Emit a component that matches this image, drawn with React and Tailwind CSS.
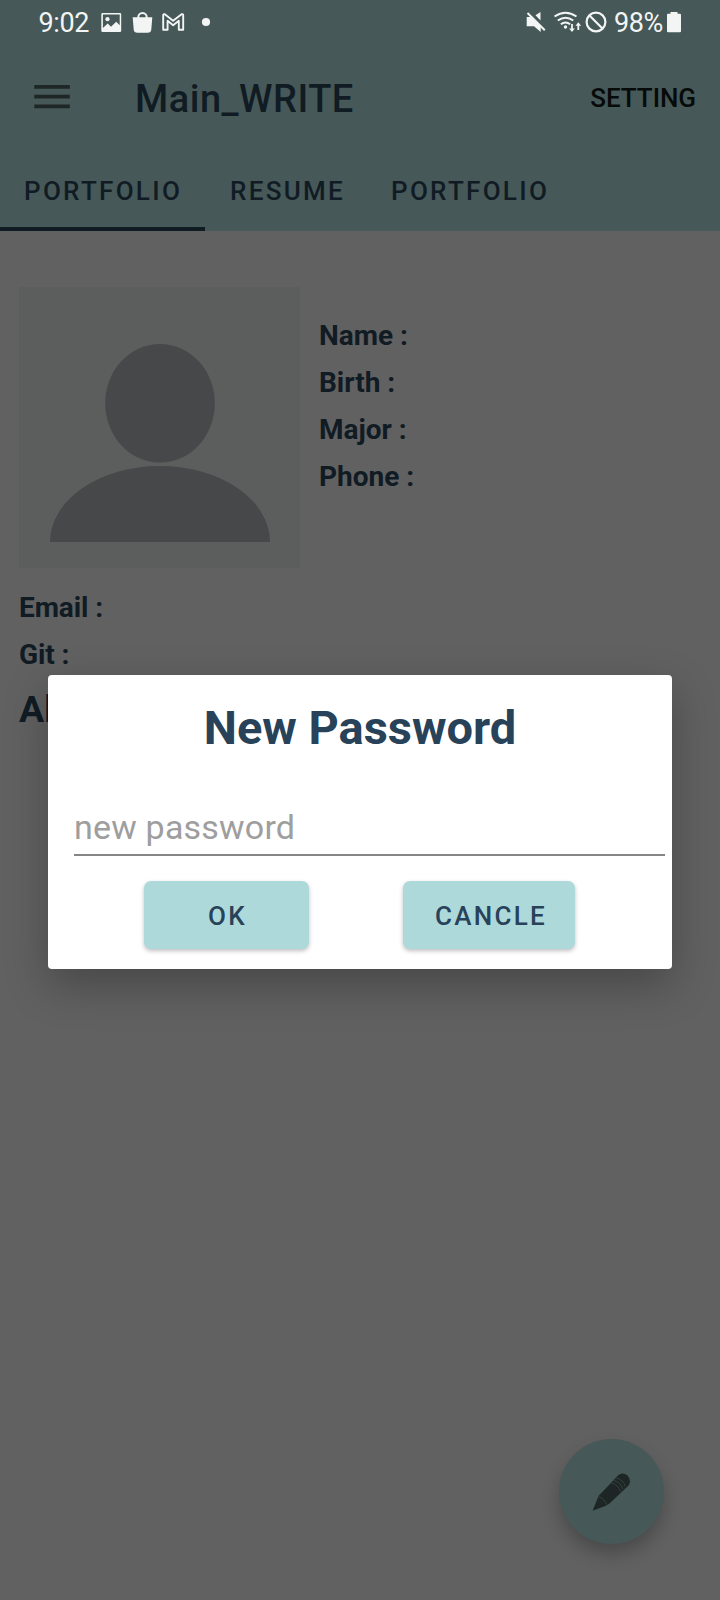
const tabs = [
  { label: 'PORTFOLIO', active: true, cls: 'w-[205px] pl-[24px]' },
  { label: 'RESUME', active: false, cls: 'w-[161px] pl-[25px]' },
  { label: 'PORTFOLIO', active: false, cls: 'w-[205px] pl-[25px]' },
];

function StatusBar() {
  return (
    <div className="flex h-[46px] items-center text-[#f2f5f4]">
      <span className="ml-[38.5px] w-[62.5px] text-[27px] leading-[46px] tracking-[-0.4px]">9:02</span>
      <svg className="h-[46px] w-[112px]" viewBox="101 0 112 46" fill="currentColor">
        <path fillRule="evenodd" d="M102.500 13h17.500q1.200 0 1.200 1.200v16.600q0 1.200-1.200 1.200h-17.500q-1.200 0-1.200-1.200v-16.600q0-1.200 1.200-1.200zM102.900 14.600v13.400l4.800-4.500 3.300 3.300 5.200-5 3.500 3.400v-10.600z" />
        <circle cx="107.500" cy="19.200" r="2.100" />
        <path d="M132.700 17.300h19.600l-1 12.200q-.4 3.200-3.600 3.200h-10.400q-3.200 0-3.600-3.200z" />
        <path d="M138.300 18v-.8a4.200 4.200 0 0 1 8.400 0v.8" fill="none" stroke="currentColor" strokeWidth="2" />
        <path d="M163.200 15.400q0-1.600 1.600-1.200l8.300 6.500 8.500-6.500q1.600-.4 1.600 1.200v14.400h-4.400v-9l-5.700 4.400-5.500-4.400v9h-4.400z" fill="none" stroke="currentColor" strokeWidth="1.900" strokeLinejoin="round" />
        <circle cx="206" cy="22" r="4.100" />
      </svg>
      <svg className="ml-[312px] h-[46px] w-[86px]" viewBox="525 0 86 46" fill="currentColor">
        <path d="M526.700 17h4.300l9.700 9.700v5.300l-6.700-5.800h-7.300zM535.500 15.300l5-3.300v8.500z" />
        <path d="M527.500 13l17.300 17.300" stroke="currentColor" strokeWidth="2" />
        <g fill="none" stroke="currentColor" strokeWidth="1.900">
          <path d="M554.500 16.600q11-7.800 22 0" />
          <path d="M557.800 20.500q7.800-5.600 15.500 0" />
          <path d="M560.800 24.200q4.700-3.500 9.400 0" />
          <circle cx="596" cy="22" r="9.400" strokeWidth="2.200" />
          <path d="M589.500 15.500l13 13" strokeWidth="2.200" />
        </g>
        <circle cx="565.500" cy="27" r="1.700" />
        <path d="M571.100 24h1.800v4.500h2l-2.900 3.500-2.900-3.500h2zM577.400 30h1.800v-4.300h1.900l-2.800-3.500-2.800 3.500h1.900z" />
      </svg>
      <span className="ml-[3px] w-[53px] text-[27px] leading-[46px] tracking-[-0.4px]">98%</span>
      <svg className="h-[46px] w-[15px]" viewBox="667 0 15 46" fill="currentColor">
        <path d="M667 14.800q0-1.100 1.100-1.100h2.400v-1.700h7v1.700h2.400q1.100 0 1.100 1.100v16.400q0 1.100-1.100 1.100h-11.800q-1.100 0-1.100-1.100z" />
      </svg>
    </div>
  );
}

function AppBar() {
  return (
    <div className="flex h-[106px] items-start">
      <svg className="mt-[39px] ml-[34px] h-[24px] w-[36px]" viewBox="0 0 36 24" fill="#1e2726">
        <path d="M.3 0h35.500v3.800H.3zM.3 9.700h35.500v3.800H.3zM.3 19.400h35.500v3.800H.3z" />
      </svg>
      <h1 className="ml-[65px] flex-1 text-[38px] leading-[106px] font-medium tracking-[0.5px] text-[#101b24]">Main_WRITE</h1>
      <span className="mr-[24px] text-[26px] leading-[104px] font-medium tracking-[-0.05px] text-[#060a09]">SETTING</span>
    </div>
  );
}

function Tabs() {
  return (
    <div className="flex h-[79px]">
      {tabs.map((t, i) => (
        <div
          key={i}
          className={
            'box-border border-b-4 text-[26px] leading-[79px] font-medium tracking-[2.300px] text-[#101b24] ' +
            t.cls +
            (t.active ? ' border-[#101b24]' : ' border-transparent')
          }
        >
          {t.label}
        </div>
      ))}
    </div>
  );
}

function Profile() {
  return (
    <div className="px-[19px] pt-[56px] font-bold text-[#101b24]">
      <div className="flex">
        <svg className="h-[281px] w-[281px] bg-[#5b5e5c]" viewBox="19 287 281 281" fill="#474849">
          <ellipse cx="160" cy="403.200" rx="54.800" ry="59.300" />
          <path d="M50 542A110 76 0 0 1 270 542z" />
        </svg>
        <div className="flex flex-col pt-[25px] pl-[19px] text-[28px] leading-[47px]">
          <span>Name :</span>
          <span>Birth :</span>
          <span>Major :</span>
          <span>Phone :</span>
        </div>
      </div>
      <div className="flex flex-col pt-[16px] text-[28px] leading-[47px] tracking-[-0.1px]">
        <span>Email :</span>
        <span>Git :</span>
      </div>
      <div className="text-[37.5px] leading-[62px]">About</div>
    </div>
  );
}

function Dialog() {
  return (
    <div className="absolute top-[675px] left-[48px] flex h-[294px] w-[624px] flex-col rounded-[4px] bg-white shadow-[0_16px_44px_0_rgba(0,0,0,0.27)]">
      <h2 className="h-[106px] text-center text-[47px] leading-[106px] font-bold text-[#284259]">New Password</h2>
      <input
        placeholder="new password"
        className="mt-[15px] mr-[7px] ml-[26px] h-[60px] border-b-2 border-[#858585] bg-transparent pt-[4px] text-[34px] tracking-[0.2px] outline-none placeholder:text-[#9e9e9e]"
      />
      <div className="mt-[25px] flex pl-[96px] text-[26px] leading-[68px] font-medium tracking-[2.300px] text-[#284259]">
        <button className="h-[68px] w-[165px] rounded-[7px] bg-[#aed9da] pt-[2px] pl-[2px] leading-[66px] shadow-[0_2px_4px_rgba(0,0,0,0.25)]">OK</button>
        <button className="ml-[94px] h-[68px] w-[172px] rounded-[7px] bg-[#aed9da] pt-[2px] pl-[4px] leading-[66px] shadow-[0_2px_4px_rgba(0,0,0,0.25)]">CANCLE</button>
      </div>
    </div>
  );
}

function EditButton() {
  return (
    <button className="absolute top-[1439px] left-[559px] flex h-[105px] w-[105px] items-center justify-center rounded-full bg-[#465857] shadow-[0_10px_18px_rgba(0,0,0,0.24)]">
      <svg className="h-[39px] w-[39px]" viewBox="592 1471 39 39">
        <path d="M592.600 1509.800L598.500 1495L618 1474.500Q622.500 1470.500 627.500 1474.500Q632 1479.500 628.500 1484.500L609.500 1502.500L606.500 1504.500Z" fill="#1d2625" />
        <path d="M598.300 1495.500q6.500 2.500 8.500 8.500M611.500 1481.800q7 2 9 8.800M613.800 1479.300q7 2 9 8.800M616.300 1477q7 2 9 8.300" fill="none" stroke="#35413f" strokeWidth="1" />
      </svg>
    </button>
  );
}

export default function App() {
  return (
    <div className="relative h-[1600px] w-[720px] overflow-hidden bg-[#616161] font-['Roboto',sans-serif]">
      <header className="h-[231px] bg-[#465857]">
        <StatusBar />
        <AppBar />
        <Tabs />
      </header>
      <Profile />
      <EditButton />
      <Dialog />
    </div>
  );
}
